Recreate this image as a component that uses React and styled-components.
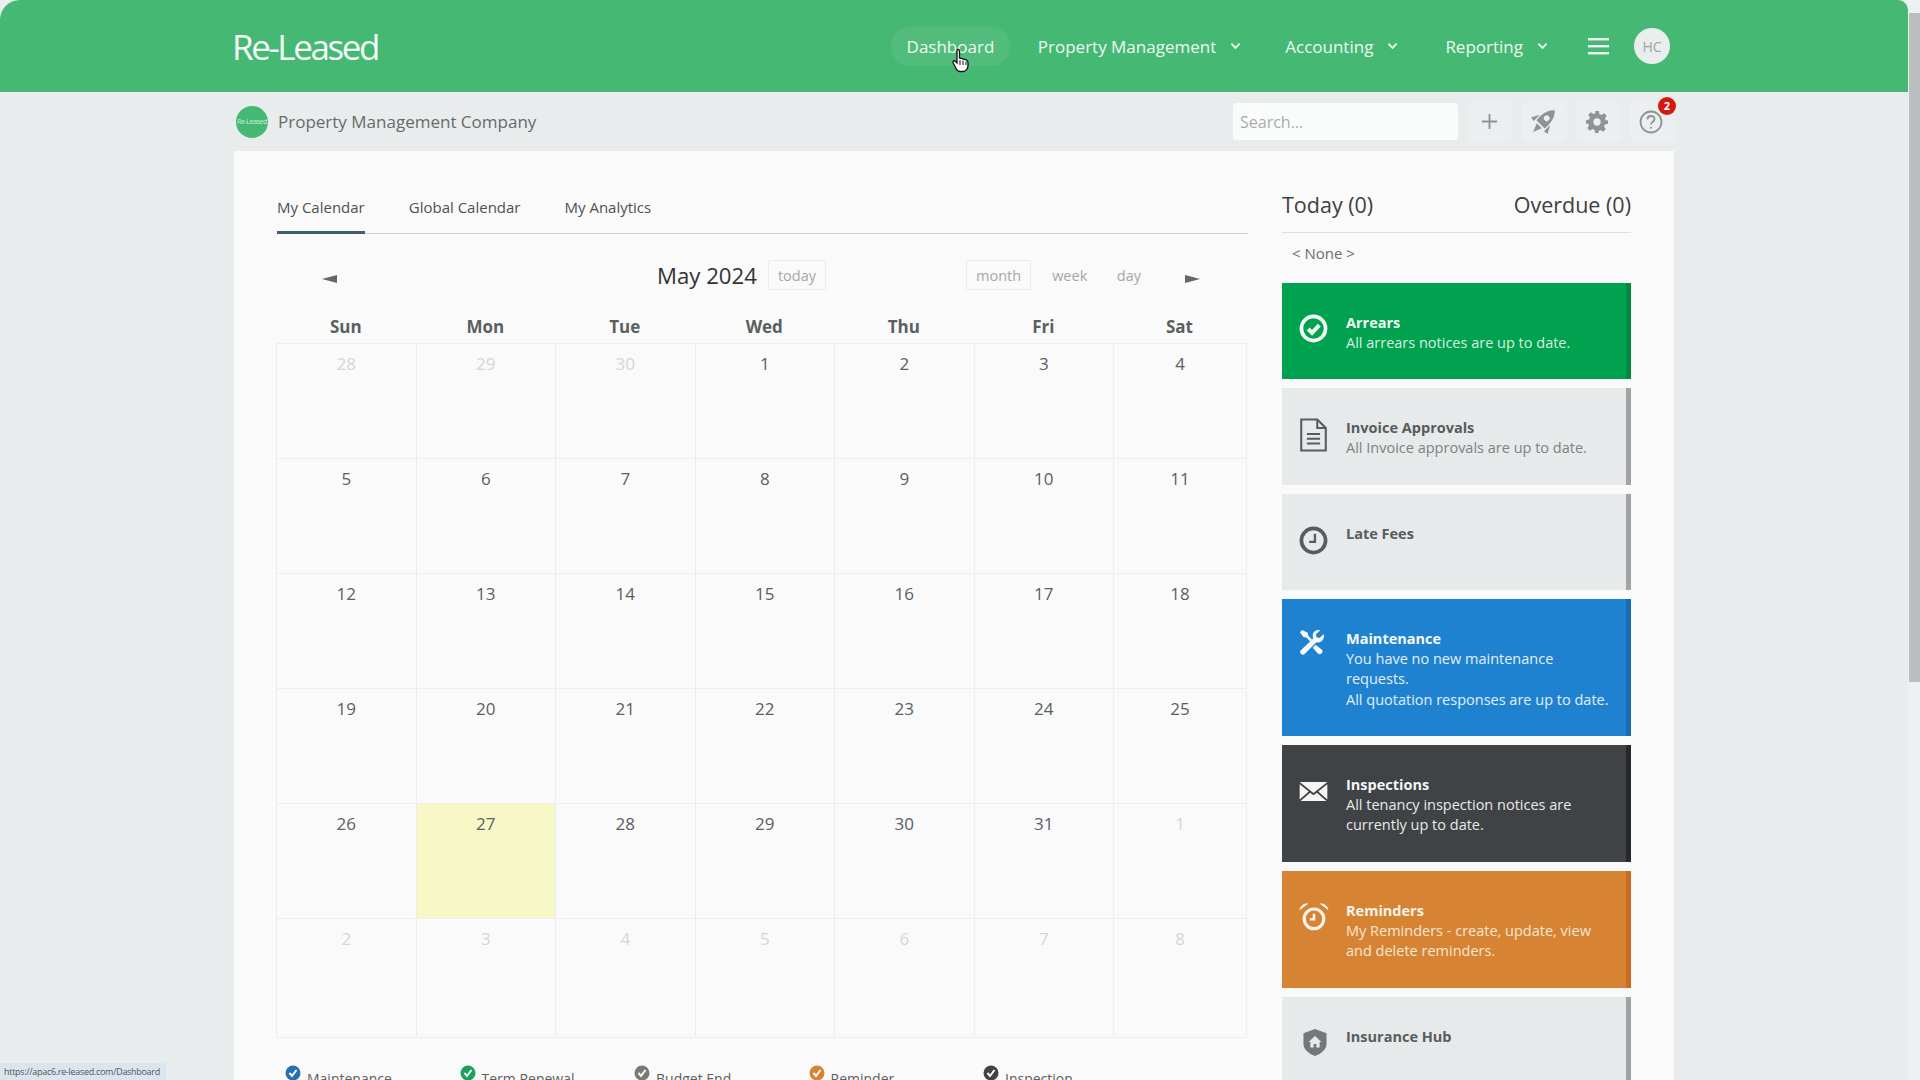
import React from 'react';
import styled, { createGlobalStyle } from 'styled-components';

const GlobalStyle = createGlobalStyle`
  html, body {
    margin: 0;
    height: 1080px;
    overflow: hidden;
    background: #fff;
    font-family: 'Open Sans', 'Noto Sans', sans-serif;
  }
  * { box-sizing: border-box; }
`;

const Frame = styled.div`
  position: relative;
  display: flex;
  width: 1920px;
  height: 1080px;
  overflow: hidden;
  background: #eceff0;
`;

const Page = styled.div`
  width: 1908px;
  height: 1080px;
  overflow: hidden;
  background: #e8ecec;
  border-top-left-radius: 20px;
  border-top-right-radius: 10px;
`;

const ScrollTrack = styled.div`
  width: 12px;
  height: 1080px;
  padding-top: 13px;
  background: #eef1f1;
`;

const ScrollThumb = styled.div`
  width: 11px;
  height: 669px;
  margin-left: 1px;
  background: #bbbebf;
`;

const TopBar = styled.header`
  height: 92px;
  background: #45b873;
  padding: 0 238px 0 232px;
  display: flex;
  align-items: center;
`;

const Logo = styled.div`
  color: #f4fbf7;
  font-size: 35px;
  letter-spacing: -2.4px;
  font-weight: 400;
  flex: 1;
`;

const NavItem = styled.div`
  display: flex;
  align-items: center;
  height: 39px;
  padding: 0 16px;
  margin-right: ${(p) => p.$gap || 0}px;
  color: #eef9f2;
  font-size: 17px;
  border-radius: 18px;
  background: ${(p) => (p.$active ? '#52bc7d' : 'transparent')};
  svg { margin-left: 14px; }
`;

const Avatar = styled.div`
  width: 36px;
  height: 36px;
  margin-left: 25px;
  border-radius: 50%;
  background: #e9eded;
  color: #9aa5a0;
  font-size: 14px;
  display: flex;
  align-items: center;
  justify-content: center;
`;

const SubBar = styled.div`
  height: 59px;
  padding: 0 233px 0 236px;
  display: flex;
  align-items: center;
`;

const CompanyBadge = styled.div`
  width: 32px;
  height: 32px;
  border-radius: 50%;
  background: #45b873;
  color: #cfeedd;
  font-size: 7px;
  letter-spacing: -0.4px;
  display: flex;
  align-items: center;
  justify-content: center;
`;

const CompanyName = styled.div`
  margin-left: 10px;
  flex: 1;
  color: #666b6b;
  font-size: 17px;
`;

const SearchBox = styled.div`
  width: 225px;
  height: 37px;
  margin-right: 1px;
  padding-left: 7px;
  background: #fafbfb;
  border-radius: 3px;
  color: #a9acac;
  font-size: 16px;
  display: flex;
  align-items: center;
`;

const ToolButton = styled.div`
  position: relative;
  width: 45px;
  height: 40px;
  margin-left: 9px;
  padding-right: 3px;
  background: #ebefef;
  border-radius: 4px;
  color: #8f9393;
  display: flex;
  align-items: center;
  justify-content: center;
`;

const Badge = styled.div`
  position: absolute;
  top: -5px;
  right: -1px;
  width: 18px;
  height: 18px;
  border-radius: 50%;
  background: #d3180f;
  color: #fff;
  font-size: 11px;
  font-weight: 700;
  display: flex;
  align-items: center;
  justify-content: center;
`;

const Card = styled.main`
  width: 1440px;
  height: 1000px;
  margin-left: 234px;
  padding: 0 43px;
  background: #fafafa;
  display: flex;
  justify-content: space-between;
`;

const CalendarCol = styled.section`
  width: 971px;
`;

const Tabs = styled.nav`
  height: 83px;
  padding-top: 46px;
  display: flex;
  gap: 44px;
  border-bottom: 1px solid #cfd1d1;
`;

const Tab = styled.div`
  height: 37px;
  font-size: 15px;
  color: #4c5252;
  border-bottom: ${(p) => (p.$active ? '3px solid #3f5f6f' : 'none')};
`;

const CalToolbar = styled.div`
  height: 82px;
  padding-left: 45px;
  display: flex;
  align-items: center;
`;

const Arrow = styled.div`
  width: 0;
  height: 0;
  margin-top: 8px;
  border-top: 4px solid transparent;
  border-bottom: 4px solid transparent;
  ${(p) => (p.$dir === 'left' ? 'border-right: 15px solid #666;' : 'border-left: 15px solid #666;')}
`;

const MonthTitle = styled.div`
  margin-left: 320px;
  font-size: 22.2px;
  white-space: nowrap;
  color: #333;
`;

const ViewButton = styled.div`
  height: 30px;
  margin-left: ${(p) => p.$gap || 0}px;
  padding: 0 9px;
  font-size: 14.5px;
  color: #a5a8a8;
  display: flex;
  align-items: center;
  border: 1px solid ${(p) => (p.$boxed ? '#ececec' : 'transparent')};
  border-radius: 2px;
`;

const WeekHead = styled.div`
  height: 27px;
  margin-left: -1px;
  display: grid;
  grid-template-columns: repeat(6, 139.5px) 133px;
`;

const DayName = styled.div`
  text-align: center;
  font-weight: 700;
  font-size: 17px;
  line-height: 22px;
  color: #5a5f5f;
`;

const Grid = styled.div`
  margin-left: -1px;
  display: grid;
  grid-template-columns: repeat(6, 139.5px) 133px;
  grid-template-rows: 115px 115px 115px 115px 115px 119px;
  border-top: 1px solid #eeeeee;
  border-left: 1px solid #eeeeee;
`;

const Cell = styled.div`
  padding-top: 8px;
  text-align: center;
  font-size: 17px;
  color: ${(p) => (p.$muted ? '#d4d6d6' : '#5a5f5f')};
  background: ${(p) => (p.$today ? '#f8f8c6' : 'transparent')};
  border-right: 1px solid #eeeeee;
  border-bottom: 1px solid #eeeeee;
`;

const Legend = styled.div`
  margin-top: 27px;
  padding-left: 8px;
  display: flex;
`;

const LegendItem = styled.div`
  width: 174.5px;
  display: flex;
  align-items: flex-start;
  font-size: 14px;
  color: #5a5f5f;
  svg { margin: 0 6px 0 0; flex: none; }
  span { margin-top: 4px; }
`;

const Side = styled.aside`
  width: 349px;
`;

const SideHead = styled.div`
  height: 82px;
  padding-top: 39px;
  display: flex;
  justify-content: space-between;
  font-size: 21.5px;
  color: #3c4141;
  border-bottom: 1px solid #dfe1e1;
`;

const NoneSelect = styled.div`
  height: 50px;
  padding: 10px 0 0 10px;
  font-size: 15px;
  color: #6a6e6e;
`;

const tones = {
  green: { bg: '#00a14f', edge: '#008a3f', fg: '#f2faf5', sub: '#d8f0e1' },
  grey: { bg: '#e6eaea', edge: '#a0a4a4', fg: '#575c5c', sub: '#7d8282' },
  blue: { bg: '#1f82d1', edge: '#1a6cb0', fg: '#f5f9fd', sub: '#e3effa' },
  dark: { bg: '#3f4345', edge: '#25292b', fg: '#f5f5f5', sub: '#e8e9e9' },
  orange: { bg: '#d78334', edge: '#c96c22', fg: '#fbf3ea', sub: '#f6e6d3' },
};

const Tile = styled.div`
  height: ${(p) => p.$h}px;
  margin-bottom: 9px;
  padding: 29px 12px 0 17px;
  display: flex;
  background: ${(p) => tones[p.$tone].bg};
  border-right: 5px solid ${(p) => tones[p.$tone].edge};
  color: ${(p) => tones[p.$tone].fg};
`;

const TileIcon = styled.div`
  width: 47px;
  flex: none;
  padding-top: ${(p) => p.$drop || 0}px;
  padding-left: ${(p) => p.$inset || 0}px;
`;

const TileTitle = styled.div`
  font-size: 14.5px;
  font-weight: 700;
  line-height: 21px;
`;

const TileText = styled.div`
  font-size: 14.5px;
  line-height: 20.3px;
  color: ${(p) => tones[p.$tone].sub};
`;

const StatusBar = styled.div`
  position: absolute;
  left: 0;
  bottom: 0;
  height: 17px;
  width: 166px;
  padding-left: 4px;
  background: #dbe5ef;
  border-top-right-radius: 3px;
  color: #555;
  font-size: 9px;
  letter-spacing: -0.3px;
  line-height: 17px;
  white-space: nowrap;
`;

const Cursor = styled.svg`
  position: absolute;
  left: 951px;
  top: 48px;
`;

const Chevron = () => (
  <svg width="11" height="8" viewBox="0 0 12 8" fill="none" stroke="currentColor" strokeWidth="2">
    <path d="M1.5 1.5 6 6l4.5-4.5" />
  </svg>
);

const Burger = () => (
  <svg width="21" height="18" viewBox="0 0 21 18" fill="#f4fbf7" style={{ marginLeft: 24 }}>
    <rect y="1" width="21" height="2.4" />
    <rect y="8" width="21" height="2.4" />
    <rect y="15" width="21" height="2.4" />
  </svg>
);

const CheckIcon = () => (
  <svg width="29" height="29" viewBox="0 0 30 30" fill="none" stroke="currentColor">
    <circle cx="15" cy="15" r="12.5" strokeWidth="3.8" />
    <path d="M9.5 15.5l4 4 7.5-8" strokeWidth="4.2" />
  </svg>
);

const DocIcon = () => (
  <svg width="29" height="34" viewBox="0 0 30 36" fill="none" stroke="currentColor" strokeWidth="2.2">
    <path d="M2 1.5h17l9 9v24H2z" />
    <path d="M19 1.5v9h9" />
    <path d="M8 17h14M8 22h14M8 27h14" />
  </svg>
);

const ClockIcon = () => (
  <svg width="29" height="29" viewBox="0 0 30 30" fill="none" stroke="currentColor">
    <circle cx="15" cy="15" r="12.5" strokeWidth="3.8" />
    <path d="M16.500 8v8.500H10.500" strokeWidth="2.4" />
  </svg>
);

const ToolsIcon = () => (
  <svg width="27" height="27" viewBox="0 0 30 30" fill="currentColor">
    <path d="M3.500 1 1 3.500l4 5.500 3.500.8 4 4 2-2-4-4-.8-3.500z" />
    <path d="M27.500 5.500l-4.700 4.500-3.200-.9-.9-3L23.500 1.400C19 .2 15 3 15.300 8c0 1 .2 1.800.5 2.500L2.300 23.400a2.900 2.900 0 0 0 4 4.300l13-13c5 1.300 9.700-3.200 8.200-9.200z" />
    <path d="M18.500 17.500l-3.300 3.300 5.800 6.400c1 1 3 1 4.200-.2 1.200-1.200 1.200-3 .2-4z" />
  </svg>
);

const MailIcon = () => (
  <svg width="29" height="21" viewBox="0 0 30 22" fill="currentColor">
    <path d="M.5 1h29L15 12.500z" />
    <path d="M.5 3.500v16l9.500-8.500zM29.500 3.500v16L20 11zM1.500 21h27L18.500 12.300 15 15l-3.500-2.700z" />
  </svg>
);

const AlarmIcon = () => (
  <svg width="30" height="29" viewBox="0 0 32 31" fill="none" stroke="currentColor">
    <circle cx="16" cy="18" r="10.500" strokeWidth="3.400" />
    <path d="M16 12.500v6h-4.500" strokeWidth="2.800" />
    <path d="M1 8c1-4 4-6 8-6zM31 8c-1-4-4-6-8-6z" fill="currentColor" strokeWidth="1" />
  </svg>
);

const ShieldIcon = () => (
  <svg width="24" height="29" viewBox="0 0 26 30" fill="#747878">
    <path d="M13 .5 25.500 5v11c0 6.500-5.500 11-12.500 13.500C6 27 .5 22.500.5 16V5z" />
    <path d="M13 8l7 6.500h-2v6h-3.500v-4h-3v4H8v-6H6z" fill="#e6eaea" />
  </svg>
);

const RocketIcon = () => (
  <svg width="28" height="28" viewBox="0 0 24 24" fill="#8f9393">
    <g transform="rotate(45 12 12)">
      <path
        fillRule="evenodd"
        d="M12 -2C16.500 1.500 17.500 8 17 15H7C6.500 8 7.500 1.500 12 -2zM12 5a2.500 2.500 0 1 0 0 5 2.500 2.500 0 0 0 0-5z"
      />
      <path d="M5.800 9.500 2 16.500l3.800.5zM18.200 9.500l3.800 7-3.800.5z" />
      <path d="M9 16.500h6L12 24z" />
    </g>
  </svg>
);

const GearIcon = () => (
  <svg width="22" height="22" viewBox="0 0 24 24" fill="#8f9393">
    <path fillRule="evenodd" d="M10 0h4l.6 3.300 2.300 1 2.800-1.900 2.900 2.900-1.900 2.800 1 2.300L24 10v4l-3.300.6-1 2.300 1.900 2.800-2.900 2.900-2.800-1.900-2.300 1L14 24h-4l-.6-3.300-2.300-1-2.800 1.900-2.900-2.900 1.900-2.800-1-2.300L0 14v-4l3.300-.6 1-2.300-1.900-2.800 2.900-2.900 2.800 1.900 2.300-1zM12 8a4 4 0 1 0 0 8 4 4 0 0 0 0-8z" />
  </svg>
);

const HelpIcon = () => (
  <svg width="24" height="24" viewBox="0 0 24 24" fill="none" stroke="#8f9393" strokeWidth="1.800">
    <circle cx="12" cy="12" r="10.500" />
    <path d="M8.500 9.500C8.500 7.500 10 6 12 6s3.500 1.300 3.500 3.200c0 2.600-3.500 2.600-3.500 5.300" />
    <circle cx="12" cy="17.800" r="1" fill="#8f9393" stroke="none" />
  </svg>
);

const PlusIcon = () => (
  <svg width="17" height="17" viewBox="0 0 18 18" stroke="#8f9393" strokeWidth="2">
    <path d="M9 1v16M1 9h16" />
  </svg>
);

const LegendDot = ({ color }) => (
  <svg width="16" height="16" viewBox="0 0 16 16">
    <circle cx="8" cy="8" r="7.500" fill={color} />
    <path d="M4.500 8l2.500 3 4.500-6" fill="none" stroke="#fff" strokeWidth="2" />
  </svg>
);

const weeks = [
  [[28, 1], [29, 1], [30, 1], [1], [2], [3], [4]],
  [[5], [6], [7], [8], [9], [10], [11]],
  [[12], [13], [14], [15], [16], [17], [18]],
  [[19], [20], [21], [22], [23], [24], [25]],
  [[26], [27, 0, 1], [28], [29], [30], [31], [1, 1]],
  [[2, 1], [3, 1], [4, 1], [5, 1], [6, 1], [7, 1], [8, 1]],
];

const tiles = [
  { tone: 'green', h: 96, drop: 2, icon: <CheckIcon />, title: 'Arrears', text: ['All arrears notices are up to date.'] },
  { tone: 'grey', h: 97, drop: 1, icon: <DocIcon />, title: 'Invoice Approvals', text: ['All Invoice approvals are up to date.'] },
  { tone: 'grey', h: 96, drop: 3, icon: <ClockIcon />, title: 'Late Fees', text: [] },
  { tone: 'blue', h: 137, drop: 1, icon: <ToolsIcon />, title: 'Maintenance', text: ['You have no new maintenance requests.', 'All quotation responses are up to date.'] },
  { tone: 'dark', h: 117, drop: 7, icon: <MailIcon />, title: 'Inspections', text: ['All tenancy inspection notices are currently up to date.'] },
  { tone: 'orange', h: 117, drop: 2, icon: <AlarmIcon />, title: 'Reminders', text: ['My Reminders - create, update, view and delete reminders.'] },
  { tone: 'grey', h: 97, drop: 2, inset: 4, icon: <ShieldIcon />, title: 'Insurance Hub', text: [] },
];

const legend = [
  ['Maintenance', '#2a6fb0'],
  ['Term Renewal', '#17a35a'],
  ['Budget End', '#7a7a72'],
  ['Reminder', '#d78334'],
  ['Inspection', '#3f4345'],
];

export default function App() {
  return (
    <Frame>
      <GlobalStyle />
      <Page>
        <TopBar>
          <Logo>Re-Leased</Logo>
          <NavItem $active $gap={11.5}>Dashboard</NavItem>
          <NavItem $gap={12}>Property Management<Chevron /></NavItem>
          <NavItem $gap={15}>Accounting<Chevron /></NavItem>
          <NavItem>Reporting<Chevron /></NavItem>
          <Burger />
          <Avatar>HC</Avatar>
        </TopBar>
        <SubBar>
          <CompanyBadge>Re-Leased</CompanyBadge>
          <CompanyName>Property Management Company</CompanyName>
          <SearchBox>Search...</SearchBox>
          <ToolButton><PlusIcon /></ToolButton>
          <ToolButton><RocketIcon /></ToolButton>
          <ToolButton><GearIcon /></ToolButton>
          <ToolButton><HelpIcon /><Badge>2</Badge></ToolButton>
        </SubBar>
        <Card>
          <CalendarCol>
            <Tabs>
              <Tab $active>My Calendar</Tab>
              <Tab>Global Calendar</Tab>
              <Tab>My Analytics</Tab>
            </Tabs>
            <CalToolbar>
              <Arrow $dir="left" />
              <MonthTitle>May 2024</MonthTitle>
              <ViewButton $boxed $gap={11}>today</ViewButton>
              <ViewButton $boxed $gap={140}>month</ViewButton>
              <ViewButton $gap={11}>week</ViewButton>
              <ViewButton $gap={9.5}>day</ViewButton>
              <ViewButton $gap={24.5}><Arrow $dir="right" /></ViewButton>
            </CalToolbar>
            <WeekHead>
              {['Sun', 'Mon', 'Tue', 'Wed', 'Thu', 'Fri', 'Sat'].map((d) => (
                <DayName key={d}>{d}</DayName>
              ))}
            </WeekHead>
            <Grid>
              {weeks.flat().map(([n, muted, today], i) => (
                <Cell key={i} $muted={muted} $today={today}>{n}</Cell>
              ))}
            </Grid>
            <Legend>
              {legend.map(([name, color]) => (
                <LegendItem key={name}>
                  <LegendDot color={color} />
                  <span>{name}</span>
                </LegendItem>
              ))}
            </Legend>
          </CalendarCol>
          <Side>
            <SideHead>
              <span>Today (0)</span>
              <span>Overdue (0)</span>
            </SideHead>
            <NoneSelect>&lt; None &gt;</NoneSelect>
            {tiles.map((t) => (
              <Tile key={t.title} $tone={t.tone} $h={t.h}>
                <TileIcon $drop={t.drop} $inset={t.inset}>{t.icon}</TileIcon>
                <div>
                  <TileTitle>{t.title}</TileTitle>
                  {t.text.map((line) => (
                    <TileText key={line} $tone={t.tone}>{line}</TileText>
                  ))}
                </div>
              </Tile>
            ))}
          </Side>
        </Card>
      </Page>
      <ScrollTrack><ScrollThumb /></ScrollTrack>
      <StatusBar>https://apac6.re-leased.com/Dashboard</StatusBar>
      <Cursor width="20" height="26" viewBox="0 0 20 26">
        <path d="M6 2c1-1 2.500-.500 2.500 1v7l6 1.500c1.500.5 2.500 1.500 2.500 3v3c0 3-2 6-5 6H9c-2 0-3-1-4-3l-3-6c-.5-1.500 1.500-2.500 2.500-1L6 15z" fill="#fff" stroke="#111" strokeWidth="1.300" />
        <path d="M9 12v5M12 12.500v4.500M15 13.500v3.500" stroke="#111" strokeWidth="1" />
      </Cursor>
    </Frame>
  );
}
